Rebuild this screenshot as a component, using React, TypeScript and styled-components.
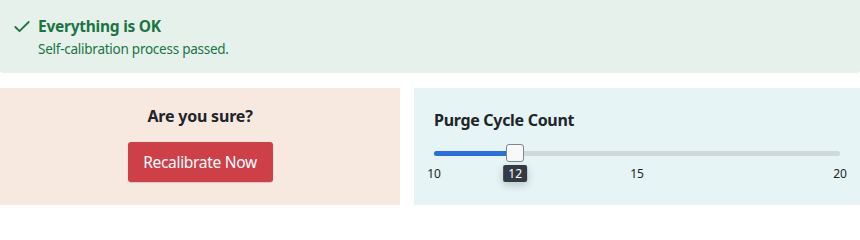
import React from "react";
import styled, { createGlobalStyle } from "styled-components";
import { Check } from "lucide-react";

const GlobalStyle = createGlobalStyle`
  body {
    margin: 0;
    background: #ffffff;
    font-family: "Noto Sans", "Open Sans", sans-serif;
    color: #212529;
  }
`;

const Page = styled.div`
  display: flex;
  flex-direction: column;
  width: 860px;
`;

const Alert = styled.div`
  display: flex;
  gap: 6px;
  height: 73px;
  box-sizing: border-box;
  padding: 16px 16px 0 12px;
  background: #e6f1eb;
  color: #1b7444;
  border-radius: 0 0 3px 3px;
`;

const AlertIcon = styled.div`
  display: flex;
  align-items: center;
  height: 20px;
  padding-top: 1px;
`;

const AlertBody = styled.div`
  display: flex;
  flex-direction: column;
  gap: 3px;
`;

const AlertTitle = styled.div`
  font-size: 15.5px;
  font-weight: 700;
  line-height: 20px;
  letter-spacing: -0.25px;
`;

const AlertText = styled.div`
  font-size: 13.5px;
  line-height: 20px;
  letter-spacing: -0.25px;
`;

const Row = styled.div`
  display: flex;
  gap: 14px;
  margin-top: 15px;
  height: 117px;
`;

const ConfirmPanel = styled.div`
  width: 400px;
  box-sizing: border-box;
  padding-top: 18px;
  background: #f8e9e0;
  display: flex;
  flex-direction: column;
  align-items: center;
  gap: 16px;
`;

const PanelTitle = styled.div`
  font-size: 16px;
  font-weight: 700;
  line-height: 20px;
  letter-spacing: -0.2px;
  color: #212529;
`;

const DangerButton = styled.button`
  height: 40px;
  width: 145px;
  padding: 0;
  border: none;
  border-radius: 3px;
  background: #cd4048;
  color: #ffffff;
  font-family: inherit;
  font-size: 15.5px;
  letter-spacing: -0.3px;
  box-shadow: 0 1px 1px rgba(0, 0, 0, 0.15);
  cursor: pointer;
`;

const SliderPanel = styled.div`
  flex: 1;
  box-sizing: border-box;
  padding: 20px 20px 0 20px;
  background: #e6f4f5;
  display: flex;
  flex-direction: column;
`;

const SliderTitle = styled(PanelTitle)`
  font-size: 16px;
  line-height: 24px;
  letter-spacing: -0.3px;
`;

const SliderArea = styled.div`
  position: relative;
  margin-top: 12px;
  height: 18px;
  display: flex;
  align-items: center;
`;

const Track = styled.div`
  position: relative;
  width: 100%;
  height: 5px;
  border-radius: 3px;
  background: #cfd9dc;
`;

const Fill = styled.div`
  position: absolute;
  left: 0;
  top: 0;
  bottom: 0;
  border-radius: 3px;
  background: #2b6fd7;
`;

const Thumb = styled.div`
  position: absolute;
  top: 0;
  width: 18px;
  height: 18px;
  box-sizing: border-box;
  margin-left: -9px;
  border: 1px solid #7d868c;
  border-radius: 3px;
  background: #f7f8f9;
`;

const Tip = styled.div`
  position: absolute;
  top: 21px;
  transform: translateX(-50%);
  padding: 0 5px;
  height: 17px;
  line-height: 17px;
  border-radius: 2px;
  background: #343a43;
  color: #ffffff;
  font-size: 12px;
  box-shadow: 0 3px 8px rgba(0, 0, 0, 0.2);
`;

const Ticks = styled.div`
  position: relative;
  height: 18px;
  margin-top: 3px;
`;

const TickLabel = styled.span`
  position: absolute;
  top: 0;
  transform: translateX(-50%);
  font-size: 12px;
  line-height: 18px;
  color: #212529;
`;

const min = 10;
const max = 20;
const value = 12;
const ticks = [10, 15, 20];

const pct = (v: number) => ((v - min) / (max - min)) * 100;

const App: React.FC = () => {
  return (
    <Page>
      <GlobalStyle />
      <Alert>
        <AlertIcon>
          <Check size={20} strokeWidth={2.2} />
        </AlertIcon>
        <AlertBody>
          <AlertTitle>Everything is OK</AlertTitle>
          <AlertText>Self-calibration process passed.</AlertText>
        </AlertBody>
      </Alert>
      <Row>
        <ConfirmPanel>
          <PanelTitle>Are you sure?</PanelTitle>
          <DangerButton>Recalibrate Now</DangerButton>
        </ConfirmPanel>
        <SliderPanel>
          <SliderTitle>Purge Cycle Count</SliderTitle>
          <SliderArea>
            <Track>
              <Fill style={{ width: `${pct(value)}%` }} />
            </Track>
            <Thumb style={{ left: `${pct(value)}%` }} />
            <Tip style={{ left: `${pct(value)}%` }}>{value}</Tip>
          </SliderArea>
          <Ticks>
            {ticks.map((t) => (
              <TickLabel key={t} style={{ left: `${pct(t)}%` }}>
                {t}
              </TickLabel>
            ))}
          </Ticks>
        </SliderPanel>
      </Row>
    </Page>
  );
};

export default App;
